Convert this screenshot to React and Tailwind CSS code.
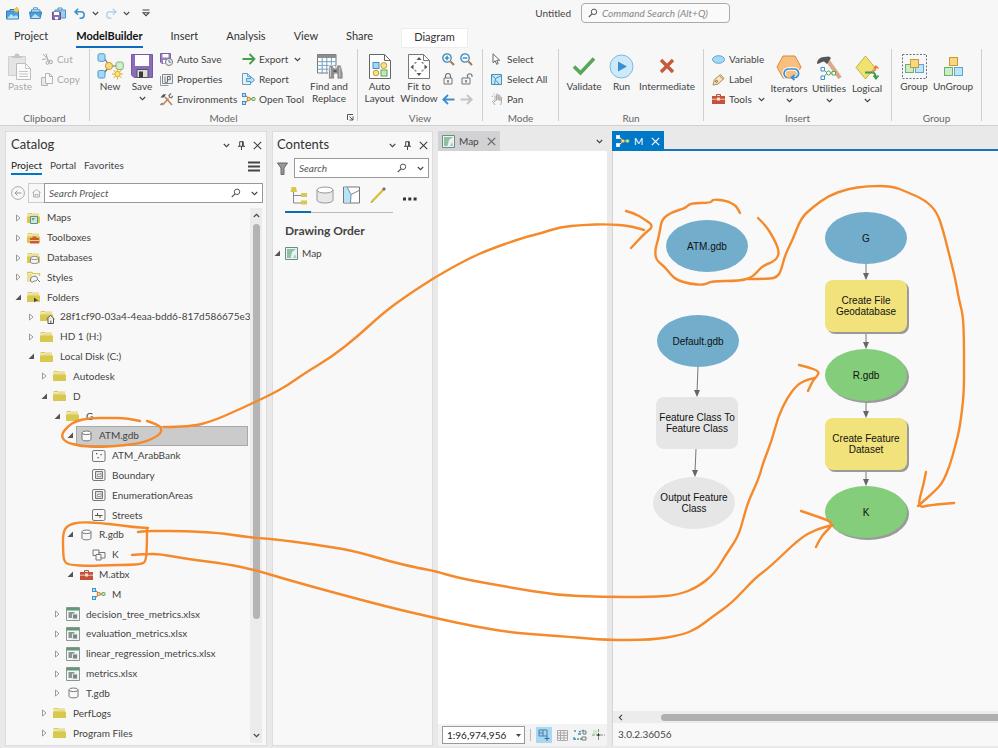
import React, { useState } from 'react'

// ---------- small glyphs ----------

const Svg = ({ w, h, className = '', children }) => (
  <svg width={w} height={h} viewBox={`0 0 ${w} ${h}`} fill="none" className={`shrink-0 ${className}`} aria-hidden="true">
    {children}
  </svg>
)

const Chevron = ({ className = '' }) => (
  <Svg w={7} h={5} className={className}><path d="M.8 1 3.500 3.700 6.200 1" stroke="#444" strokeWidth="1.100" /></Svg>
)

const Close = ({ color = '#444' }) => (
  <Svg w={9} h={9}><path d="M.8 .8 8.200 8.200M8.200 .8 .8 8.200" stroke={color} strokeWidth="1.200" /></Svg>
)

const Pin = () => (
  <Svg w={7} h={9}>
    <path d="M1.700 5V.7h3.600V5M0 5.300h7M3.500 5.300V9" stroke="#444" strokeWidth="1" />
    <path d="M4.500 .7V5" stroke="#444" strokeWidth="1" />
  </Svg>
)

const Magnifier = ({ size = 11 }) => (
  <svg width={size} height={size} viewBox="0 0 11 11" fill="none" className="shrink-0" aria-hidden="true">
    <circle cx="6.600" cy="4.200" r="3" stroke="#555" strokeWidth="1.100" />
    <path d="M4.400 6.400 .9 9.900" stroke="#555" strokeWidth="1.300" />
  </svg>
)

// ---------- ribbon icons ----------

const ProjectNew = () => (
  <Svg w={13} h={13}>
    <path d="M.5 4h12v8H.5z" fill="#4ba0dc" stroke="#2f7fb8" />
    <path d="M4 4V2.500h4" stroke="#2f6f9f" />
    <path d="M1 11.500 5 7l3 2.500 2-1.500 2 2v1.500z" fill="#bfe3f5" />
    <circle cx="10.500" cy="3" r="2.200" fill="#f5c73c" />
    <path d="M10.500 0v1M13 3h-1M8.500 1l.6.6M12.500 1l-.6.6" stroke="#e0aa20" />
  </Svg>
)
const ProjectOpen = () => (
  <Svg w={13} h={12}>
    <path d="M2.500 5V2.800h8.500V5" fill="#dff0fa" stroke="#4a93c4" />
    <path d="M4.500 2.500V.8h4v1.700" stroke="#4a93c4" />
    <path d="M.6 5h12l-1.400 6.400H1.600z" fill="#4ba0dc" stroke="#2f7fb8" />
    <path d="M2 11 6 7l5.500 4z" fill="#bfe3f5" />
  </Svg>
)
const ProjectSave = () => (
  <Svg w={14} h={13}>
    <path d="M3 3h10.500v8H3z" fill="#9ccdea" stroke="#4a93c4" />
    <path d="M6 3V1h4v2" stroke="#4a93c4" />
    <path d="M.5 5h8v7.500h-8z" fill="#8d72b2" stroke="#6a4f92" />
    <path d="M2 5h5v3H2zM3 10h3v2.500H3z" fill="#fff" />
  </Svg>
)
const Undo = ({ color, flip }) => (
  <Svg w={12} h={11} className={flip ? '-scale-x-100' : ''}>
    <path d="M4.200 .8 1 3.800 4.200 6.800M1 3.800h6a3.200 3.200 0 0 1 0 6.400H5.500" stroke={color} strokeWidth="1.500" />
  </Svg>
)
const Customize = () => (
  <Svg w={8} h={8}><path d="M.5 1h7M1.200 3.800 4 6.600 6.800 3.800z" stroke="#444" strokeWidth="1.100" /></Svg>
)
const PasteIcon = () => (
  <Svg w={24} h={27}>
    <path d="M.5 3.500h17v19H.5z" fill="#e4e4e4" stroke="#d0d0d0" />
    <path d="M4 5h10V3h-2.500a2.500 2.500 0 0 0-5 0H4z" fill="#c4c4c4" />
    <path d="M8.500 10.500h9l5 5v11h-14z" fill="#fafafa" stroke="#bcbcbc" />
    <path d="M17.500 10.500v5h5M11 18.500h9M11 21h9M11 23.500h9" stroke="#c6c6c6" />
  </Svg>
)
const Cut = () => (
  <Svg w={12} h={12}>
    <path d="M2 1 9 8.500M5 .5 7 8" stroke="#a9a9a9" />
    <circle cx="9.800" cy="9" r="1.700" stroke="#a9a9a9" /><circle cx="6.500" cy="9.800" r="1.500" stroke="#a9a9a9" />
    <path d="M1 6.500l4-.5" stroke="#a9a9a9" />
  </Svg>
)
const Copy = () => (
  <Svg w={12} h={13}>
    <path d="M.5 4.500h6v8h-6z" fill="#e9e9e9" stroke="#b5b5b5" />
    <path d="M4.500 .5h4l3 3v7h-7z" fill="#f8f8f8" stroke="#b5b5b5" />
    <path d="M8.500 .5v3h3" stroke="#b5b5b5" />
  </Svg>
)
const Burst = ({ x, y }) => (
  <g transform={`translate(${x} ${y})`}>
    <path d="M0-5.500V5.500M-5.500 0H5.500M-4-4 4 4M4-4-4 4" stroke="#dcb02c" strokeWidth="1" />
    <circle r="2.700" fill="#fbe27a" stroke="#dcb02c" />
  </g>
)
const NewModel = () => (
  <Svg w={27} h={27}>
    <path d="M7 5 12 12M7 20l5-6M14 13h7" stroke="#666" strokeWidth="1.200" />
    <rect x="1" y=".8" width="7" height="7.500" rx="1.500" fill="#a5d8f3" stroke="#4a9bcb" />
    <rect x="1" y="17.500" width="7" height="7.500" rx="1.500" fill="#a5d8f3" stroke="#4a9bcb" />
    <circle cx="12" cy="13" r="3.600" fill="#f9d878" stroke="#d59a2b" />
    <rect x="19" y="9" width="7.300" height="7.500" rx="2" fill="#d2edc9" stroke="#79b877" />
    <Burst x={20.500} y={21} />
  </Svg>
)
const Save = () => (
  <Svg w={22} h={24}>
    <path d="M.5 .5h21v23H3L.5 21z" fill="#8a6db8" stroke="#7757a6" />
    <path d="M4 1h14v11H4z" fill="#fdfdfd" />
    <path d="M6 15.500h11v8H6z" fill="#dedede" stroke="#555" />
    <path d="M8 17.500h4v6H8z" fill="#3b3b3b" />
  </Svg>
)
const AutoSave = () => (
  <Svg w={13} h={13}>
    <path d="M.5 .5h10v10H2l-1.500-1.500z" fill="#9a82c0" stroke="#7a5ea8" />
    <path d="M2.500 1h6v3.500h-6zM3 7h3v3.500H3z" fill="#fff" />
    <circle cx="9" cy="9" r="3.500" fill="#f4f4f4" stroke="#777" />
    <path d="M9 6.800V9.200h2" stroke="#3f84b8" />
  </Svg>
)
const Properties = () => (
  <Svg w={13} h={13}>
    <path d="M2.500 1.500h10v9h-10z" fill="#ededed" stroke="#888" />
    <path d="M.5 3v9.500h8" stroke="#999" />
    <path d="M5 3.500v6h2" stroke="#4a93c4" />
    <path d="M7.500 9.500v-6h2.700v3.200H8" stroke="#666" />
  </Svg>
)
const Hammer = () => (
  <Svg w={13} h={13}>
    <path d="M5 4l7 8M8.500 5.500 2.500 12" stroke="#c58a60" strokeWidth="1.800" />
    <path d="M.5 4.500 3 1.500 6 1 4 4.500z" fill="#555" />
    <path d="M11 .5 9 2.500l.5 1.800 2 .4 1.300-1.700M2.500 10l-2 2" stroke="#777" strokeWidth="1.300" />
  </Svg>
)
const Export = () => (
  <Svg w={14} h={12}><path d="M.5 6h12M7.500 1l5 5-5 5" stroke="#43a047" strokeWidth="1.800" /></Svg>
)
const Report = () => (
  <Svg w={13} h={12}>
    <path d="M.5 .5h5l3 3v8h-8z" fill="#e3f1fb" stroke="#6f9fc0" /><path d="M5.500 .5v3h3" stroke="#6f9fc0" />
    <path d="M4.500 5.500h4v-2l4 3.500-4 3.500v-2h-4z" fill="#bfe1f7" stroke="#4a9bcb" />
  </Svg>
)
const ModelGlyph = ({ light }) => (
  <Svg w={14} h={12}>
    <path d="M4 2.500 6.500 6 4 9.500M7 6h4" stroke={light ? '#fff' : '#666'} />
    <rect x=".5" y=".5" width="3" height="3" fill={light ? '#fff' : '#bfe1f7'} stroke={light ? '#d6ecfa' : '#3f93c9'} />
    <rect x=".5" y="8.500" width="3" height="3" fill={light ? '#fff' : '#bfe1f7'} stroke={light ? '#d6ecfa' : '#3f93c9'} />
    <circle cx="6.800" cy="6" r="1.700" fill={light ? '#ffe9a6' : '#f8cf8d'} stroke={light ? '#b9853d' : '#d9822e'} />
    <rect x="10" y="4.500" width="3" height="3" rx=".8" fill="#d5eecf" stroke={light ? '#6aa569' : '#58a657'} />
  </Svg>
)
const FindReplace = () => (
  <Svg w={27} h={27}>
    <path d="M1.500 1.500h18.500v18.500h-18.500z" fill="#fff" stroke="#777" />
    <path d="M1.500 1.500h18.500v3.500h-18.500z" fill="#8d8d8d" />
    <path d="M1.500 8.700h18.500M1.500 12.400h18.500M1.500 16.200h18.500M6.200 5v15M10.800 5v15M15.400 5v15" stroke="#6fa2c4" />
    <path d="M13 12h4l.8 3h2.400l.8-3h4l2 8v6h-6v-5h-2.500v5H12.500v-6z" fill="#8f8f8f" stroke="#f8f8f8" strokeWidth=".8" />
    <path d="M14.500 14v10M23.800 14v10" stroke="#c9c9c9" />
    <path d="M17.500 18h3" stroke="#444" strokeWidth="1.400" />
  </Svg>
)
const AutoLayout = () => (
  <Svg w={22} h={25}>
    <path d="M.5 .5h15l6 6v18H.5z" fill="#fdfdfd" stroke="#666" /><path d="M15.500 .5v6h6" stroke="#666" />
    <rect x="4" y="8.500" width="6" height="6" fill="#a5d8f3" stroke="#3f93c9" />
    <circle cx="14.800" cy="11.500" r="3" fill="#f9e08b" stroke="#c79b2c" />
    <circle cx="7" cy="19" r="2.800" fill="#f9e08b" stroke="#c79b2c" />
    <rect x="12" y="16" width="6" height="6" fill="#c4e8bc" stroke="#58a657" />
  </Svg>
)
const FitWindow = () => (
  <Svg w={22} h={25}>
    <path d="M.5 .5h15l6 6v18H.5z" fill="#fdfdfd" stroke="#777" /><path d="M15.500 .5v6h6" stroke="#777" />
    <path d="m11 3 2.500 3h-5zM11 22l2.500-3h-5zM2.500 13l3-2.500v5zM19.500 13l-3-2.500v5z" fill="#555" />
    <path d="M7 10V8.500h1.500M13.500 8.500H15V10M15 15.500V17h-1.500M8.500 17H7v-1.500" stroke="#777" />
  </Svg>
)
const Zoom = ({ plus }) => (
  <Svg w={13} h={13}>
    <circle cx="5" cy="5" r="4.200" fill="#f4fafd" stroke="#3c87bd" strokeWidth="1.300" />
    <path d={plus ? 'M2.700 5h4.600M5 2.700v4.600' : 'M2.700 5h4.600'} stroke="#2f6f9f" strokeWidth="1.200" />
    <path d="m8.500 8.500 3.500 3.500" stroke="#b5743c" strokeWidth="2" />
  </Svg>
)
const Lock = ({ open }) => (
  <Svg w={13} h={12}>
    <path d={open ? 'M7.500 5V3a2 2 0 0 1 4.500 0v1' : 'M3.500 5V3a2.500 2.500 0 0 1 5 0v2'} stroke="#777" strokeWidth="1.200" />
    <path d="M2 5h8v6H2z" fill="#f5f5f5" stroke="#777" /><path d="M6 7v2.500" stroke="#555" strokeWidth="1.300" />
  </Svg>
)
const Arrow = ({ color, flip }) => (
  <Svg w={13} h={11} className={flip ? '-scale-x-100' : ''}><path d="M12.500 5.500H1.500M6 1 1.300 5.500 6 10" stroke={color} strokeWidth="1.800" /></Svg>
)
const Cursor = () => (
  <Svg w={11} h={12}><path d="M2 .8v9l2.200-2 1.500 3.500 1.500-.7-1.500-3.300h3z" fill="#fff" stroke="#666" /></Svg>
)
const SelectAll = () => (
  <Svg w={11} h={11}><path d="M.5 .5h10v10H.5z" fill="#c2e9fa" stroke="#4a8fb5" /><path d="M.5 1l4 3.500-1 6M4.500 4.500l6-3M5 6.500l3 3.500" stroke="#4a8fb5" /></Svg>
)
const Pan = () => (
  <Svg w={12} h={13}>
    <path d="M4 12 1.500 8.500l1-1L4 9V3.500a.8.8 0 0 1 1.500 0V7.500M5.500 7V2a.8.8 0 0 1 1.700 0v5.500M7.200 7V3a.8.8 0 0 1 1.700 0v5M9 7.500V4.500a.8.8 0 0 1 1.500 0V9L9.500 12" stroke="#a2a2a2" strokeWidth=".9" />
    <path d="M.8 4l1.200-1.500M2.500 1l1-.5" stroke="#aaa" />
  </Svg>
)
const Validate = () => (
  <Svg w={24} h={20}><path d="M2 10.500 8.500 17 22 2.500" stroke="#57a65b" strokeWidth="3.600" /></Svg>
)
const Run = () => (
  <Svg w={25} h={25}><circle cx="12.500" cy="12.500" r="11.500" fill="#cdeafa" stroke="#7cb9df" /><path d="M9 7.500 18 12.500 9 17.500z" fill="#3a8fd0" /></Svg>
)
const Stop = () => (
  <Svg w={16} h={16}><path d="M2 2l12 12M14 2 2 14" stroke="#c85a3c" strokeWidth="3.400" /></Svg>
)
const Variable = () => (
  <Svg w={13} h={9}><ellipse cx="6.500" cy="4.500" rx="6" ry="3.800" fill="#a5d8f7" stroke="#5fa7d3" /></Svg>
)
const LabelIcon = () => (
  <Svg w={13} h={13}><path d="M1 12 2.500 6.500 8.500 1.500l3.500 4-6 5.500z" fill="#fae3bd" stroke="#b08a55" /><circle cx="4.500" cy="8.300" r="1" stroke="#8c6a3b" /><path d="m7.500 2.500 3.500 4" stroke="#b08a55" /></Svg>
)
const Toolbox = () => (
  <Svg w={13} h={10}>
    <path d="M4.500 2V.6h4V2" stroke="#b8452b" /><path d="M0 2h13v8H0z" fill="#c4523a" />
    <path d="M0 5.200h5M8 5.200h5" stroke="#f0c9be" /><path d="M5 3.500h3v3H5z" fill="#f6ded7" />
  </Svg>
)
const Iterators = () => (
  <Svg w={26} h={26}>
    <path d="M7 1h12l6 11-6 11H7L1 12z" fill="#f8bf7e" stroke="#d5893d" />
    <path d="M11 22.500a5 4.500 0 0 1 1-8.500h7a4.500 4.500 0 0 1 1 8.500h-4" stroke="#fff" strokeWidth="3.500" />
    <path d="M11 22.500a5 4.500 0 0 1 1-8.500h7a4.500 4.500 0 0 1 1 8.500h-4M18.500 20l-3 2.500 3 2.500" stroke="#3a8fd0" strokeWidth="1.700" />
  </Svg>
)
const Utilities = () => (
  <Svg w={26} h={26}>
    <path d="m12 6 12 17" stroke="#dba98a" strokeWidth="4" />
    <path d="M1 9c0-4 3-7 7-7l5-.5 2 1.500-4 6-3-2.500C5 6.500 4 9 1 9z" fill="#555" />
    <path d="M7 14 11 18 7 23M12 18h6" stroke="#58a657" />
    <path d="M5 12.500h3.500V16H5zM5 21h3.500v3.500H5z" fill="#fff" stroke="#3a8fd0" />
    <circle cx="12.500" cy="18" r="2" fill="#fff" stroke="#58a657" /><path d="M16 16.500h3.500V20H16z" fill="#fff" stroke="#58a657" />
  </Svg>
)
const Logical = () => (
  <Svg w={25} h={26}>
    <path d="M10.500 1 20 12.500 10.500 24 1 12.500z" fill="#f0e173" stroke="#c4b23e" />
    <path d="M10 17.500h7c3 0 3.500 2 4 6M18.500 20.500l2.500 3 2.500-3" stroke="#3f9a4a" strokeWidth="1.800" />
    <path d="M17 17c3-1 4-2 4-5M18.800 13.500 21 11l2.500 2.500" stroke="#e08050" strokeWidth="1.500" />
  </Svg>
)
const Blocks = ({ x = 0, y = 0, tight }) => (
  <g transform={`translate(${x} ${y})`}>
    <rect x=".5" y={tight ? 8.500 : 10.500} width="8" height="8" fill="#cdecc5" stroke="#6bb068" />
    <rect x="10.500" y={tight ? 8.500 : 10.500} width="8" height="8" fill="#bfe3fa" stroke="#5fa7d3" />
    <rect x="5.500" y={tight ? 3.500 : .5} width="8" height="8" fill="#f8d77f" stroke="#c99b35" />
  </g>
)
const GroupIcon = () => (
  <Svg w={25} h={25}>
    <path d="M.5 .5h24v24H.5z" stroke="#6a7280" strokeDasharray="2 1.500" /><Blocks x={3} y={2} tight />
  </Svg>
)
const UnGroupIcon = () => <Svg w={19} h={19}><Blocks /></Svg>

// ---------- tree icons ----------

const FolderShape = () => (
  <>
    <path d="M.5 2.500h4l1-1.200h6.500v9H.5z" fill="#e9df9a" />
    <path d="M0 4.500h13V11H0z" fill="#d9c84e" />
    <path d="M.5 2.500 1 1.500h4" stroke="#d9c84e" />
  </>
)
const TREE_ICONS = {
  folder: <Svg w={14} h={12}><FolderShape /></Svg>,
  maps: <Svg w={14} h={12}><FolderShape /><path d="M3.500 4.500h7v7h-7z" fill="#cfe8d7" stroke="#5c8f86" /><path d="M5 6h3L5.500 9z" fill="#5c9f86" /></Svg>,
  toolboxes: <Svg w={14} h={12}><FolderShape /><path d="M3 6h9v5.500H3zM5.500 4.500h4V6h-4z" fill="#cb5a33" /><path d="M3 8.500h9" stroke="#f3c9a8" /></Svg>,
  databases: <Svg w={14} h={12}><FolderShape /><path d="M3.500 6v4c0 2 8 2 8 0V6" fill="#f4f4f4" stroke="#888" /><ellipse cx="7.500" cy="6" rx="4" ry="1.500" fill="#fff" stroke="#888" /></Svg>,
  styles: <Svg w={14} h={12}><path d="M.5 11V1.500h4.500l1 1.200h6.500V5" stroke="#d9c84e" strokeWidth="1.300" /><path d="M0 3h5v8H0z" fill="#e9df9a" /><path d="M3.500 9c0-3 3-4.500 5.500-3.500 2 1 2 3 .5 4-1.500 1-2 0-3 1s-3 .5-3-1.500z" fill="#f4f4f4" stroke="#777" /><path d="m10 8 3 3" stroke="#777" /></Svg>,
  folders: <Svg w={14} h={12}><FolderShape /><path d="M7 6.500v5l2-1.700h2.500z" fill="#444" /></Svg>,
  home: <Svg w={15} h={14}><FolderShape /><path d="M6.500 9 10.500 5.500 14.500 9M8 8.500v5h5.500v-5" fill="#f8f8f8" stroke="#555" /><path d="M10.800 10.500v3" stroke="#555" /></Svg>,
  gdb: <Svg w={11} h={12}><path d="M1 2.800v6.400c0 2.200 9 2.200 9 0V2.800" fill="#f8f8f8" stroke="#777" /><ellipse cx="5.500" cy="2.800" rx="4.500" ry="1.800" fill="#fff" stroke="#777" /></Svg>,
  points: <Svg w={14} h={12}><rect x=".5" y=".5" width="12.500" height="11" rx="1.500" stroke="#777" /><path d="M4 3h1.300v1.300H4zM8.500 4h1.300v1.300H8.500zM5.500 7h1.300v1.300H5.500z" fill="#555" /></Svg>,
  polygon: <Svg w={14} h={12}><rect x=".5" y=".5" width="12.500" height="11" rx="1.500" stroke="#777" /><path d="M3.500 2.500h7v7h-7z" fill="#ddd" stroke="#777" /><path d="M5.500 7.500v-2h1.500l2-1v3z" fill="#fff" stroke="#888" strokeWidth=".8" /></Svg>,
  line: <Svg w={14} h={12}><rect x=".5" y=".5" width="12.500" height="11" rx="1.500" stroke="#777" /><path d="M3 6.500h7.500M5.500 4v2.500M8 6.500v2.500" stroke="#555" /></Svg>,
  dataset: <Svg w={14} h={12}><path d="M1 1h6v5.500H1z" stroke="#777" /><path d="M7 3.500h6V9H7z" fill="#f8f8f8" stroke="#777" /><path d="M4 5.500h5V11H4z" fill="#f8f8f8" stroke="#777" /></Svg>,
  toolbox: <Toolbox />,
  model: <ModelGlyph />,
  excel: <Svg w={14} h={14}><path d="M.5 .5h13v13H.5z" fill="#f3f6f4" stroke="#87988f" /><path d="M1 1h12v2.500H1z" fill="#5f9a75" /><path d="M2.500 5h6v6h-6z" fill="#8a9690" /><path d="M6.500 7h5v5h-5z" fill="#7c828a" stroke="#e8e8e8" /></Svg>,
}

const MapIcon = () => (
  <Svg w={13} h={13}>
    <path d="M.5 .5h12v12H.5z" fill="#eaf3ec" stroke="#6b8f82" />
    <path d="M2 2h9L7 5 5.500 11H2z" fill="#8fc0a3" /><path d="M8 11l2-4 1.500 4z" fill="#9fd0dd" />
  </Svg>
)

const Twisty = ({ open }) => open
  ? <Svg w={7} h={7}><path d="M6 .5V6H.5z" fill="#555" /></Svg>
  : <Svg w={7} h={8}><path d="M1.500 1v6l3.500-3z" fill="#fff" stroke="#999" /></Svg>

// ---------- data ----------

const TABS = ['Project', 'ModelBuilder', 'Insert', 'Analysis', 'View', 'Share']

const LEVELS = ['pl-[9px]', 'pl-[22px]', 'pl-[35px]', 'pl-[48px]', 'pl-[61px]', 'pl-[74px]']

const TREE = [
  [0, 'closed', 'maps', 'Maps'],
  [0, 'closed', 'toolboxes', 'Toolboxes'],
  [0, 'closed', 'databases', 'Databases'],
  [0, 'closed', 'styles', 'Styles'],
  [0, 'open', 'folders', 'Folders'],
  [1, 'closed', 'home', '28f1cf90-03a4-4eaa-bdd6-817d586675e3'],
  [1, 'closed', 'folder', 'HD 1 (H:)'],
  [1, 'open', 'folder', 'Local Disk (C:)'],
  [2, 'closed', 'folder', 'Autodesk'],
  [2, 'open', 'folder', 'D'],
  [3, 'open', 'folder', 'G'],
  [4, 'open', 'gdb', 'ATM.gdb'],
  [5, '', 'points', 'ATM_ArabBank'],
  [5, '', 'polygon', 'Boundary'],
  [5, '', 'polygon', 'EnumerationAreas'],
  [5, '', 'line', 'Streets'],
  [4, 'open', 'gdb', 'R.gdb'],
  [5, '', 'dataset', 'K'],
  [4, 'open', 'toolbox', 'M.atbx'],
  [5, '', 'model', 'M'],
  [3, 'closed', 'excel', 'decision_tree_metrics.xlsx'],
  [3, 'closed', 'excel', 'evaluation_metrics.xlsx'],
  [3, 'closed', 'excel', 'linear_regression_metrics.xlsx'],
  [3, 'closed', 'excel', 'metrics.xlsx'],
  [3, 'closed', 'gdb', 'T.gdb'],
  [2, 'closed', 'folder', 'PerfLogs'],
  [2, 'closed', 'folder', 'Program Files'],
]

// Model elements on the diagram canvas
const NODES = [
  { text: 'ATM.gdb', className: 'left-[53px] top-[69px] rounded-[50%] bg-[#72adcc]' },
  { text: 'G', className: 'left-[212px] top-[61px] rounded-[50%] bg-[#72adcc]' },
  { text: 'Default.gdb', className: 'left-[44px] top-[164px] rounded-[50%] bg-[#72adcc]' },
  { text: 'Feature Class To Feature Class', className: 'left-[43px] top-[246px] rounded-lg bg-[#e6e6e6]' },
  { text: 'Output Feature Class', className: 'left-[40px] top-[326px] rounded-[50%] px-1 bg-[#e6e6e6]' },
  { text: 'Create File Geodatabase', className: 'left-[212px] top-[129px] rounded-lg px-2 bg-[#f2e27b] shadow-[2px_2px_0_#9a9a9a]' },
  { text: 'R.gdb', className: 'left-[212px] top-[198px] rounded-[50%] bg-[#84cd7b] shadow-[2px_2px_0_#9a9a9a]' },
  { text: 'Create Feature Dataset', className: 'left-[212px] top-[267px] rounded-lg px-1 bg-[#f2e27b] shadow-[2px_2px_0_#9a9a9a]' },
  { text: 'K', className: 'left-[212px] top-[335px] rounded-[50%] bg-[#84cd7b] shadow-[2px_2px_0_#9a9a9a]' },
]

const LINKS = [
  [253, 112, 253, 129], [253, 182, 253, 198], [253, 250, 253, 267], [253, 319, 253, 335],
  [85, 216, 84, 246], [83, 298, 82, 326],
]

// Freehand ink strokes
const INK = [
  [[140, 421], [127, 418], [108, 418], [90, 418], [76, 421], [68, 426], [61, 435], [65, 442], [80, 446], [98, 447], [117, 446], [143, 443], [160, 435], [162, 428], [156, 424], [147, 421]],
  [[164, 427], [190, 427], [213, 421], [240, 409], [255, 402], [272, 394], [288, 385], [305, 373], [333, 356], [358, 336], [382, 314], [402, 299], [435, 277], [468, 259], [488, 250], [522, 238], [542, 233], [560, 227], [582, 225], [608, 224], [630, 226], [644, 230]],
  [[626, 211], [634, 213], [644, 219], [654, 226], [644, 234], [631, 248]],
  [[740, 213], [737, 207], [733, 204], [727, 201], [713, 199], [711, 203], [690, 203], [686, 208], [672, 212], [662, 219], [660, 230], [658, 240], [655, 250], [656, 260], [665, 267], [671, 275], [677, 280], [690, 284], [705, 285], [711, 281], [740, 281], [753, 277], [762, 266], [773, 262], [778, 257], [779, 250], [773, 237], [766, 226], [758, 218]],
  [[748, 279], [770, 279], [777, 277], [781, 271], [785, 255], [793, 239], [801, 218], [813, 207], [828, 196], [847, 189], [867, 186], [892, 186], [907, 192], [925, 200], [937, 212], [943, 230], [948, 250], [955, 277], [959, 300], [963, 315], [964, 340], [964, 365], [964, 393], [960, 427], [955, 447], [950, 465], [943, 482], [935, 491], [918, 506]],
  [[926, 472], [924, 483], [917, 508], [930, 505], [954, 503]],
  [[147, 528], [147, 545], [146, 560], [143, 564], [128, 565], [110, 565], [90, 566], [70, 565], [64, 562], [63, 550], [63, 532], [68, 525], [80, 522], [100, 523], [118, 525], [133, 527], [148, 528]],
  [[138, 532], [147, 531], [157, 531], [183, 531], [220, 533], [240, 536], [257, 538], [272, 539], [312, 544], [355, 551], [388, 561], [418, 568], [435, 571], [458, 578], [508, 587], [555, 595], [602, 597], [652, 597], [678, 595], [698, 587], [715, 573], [725, 556], [738, 537], [743, 520], [748, 502], [759, 478], [763, 463], [772, 440], [778, 417], [787, 398], [797, 385], [806, 380], [815, 378]],
  [[799, 365], [808, 367], [821, 372], [813, 380], [808, 391]],
  [[132, 555], [145, 554], [160, 554], [187, 559], [227, 564], [255, 570], [285, 579], [328, 591], [388, 607], [435, 618], [477, 627], [515, 633], [572, 637], [605, 640], [652, 640], [682, 635], [698, 628], [712, 617], [732, 603], [755, 578], [770, 567], [800, 538], [817, 529], [833, 525]],
  [[801, 511], [816, 516], [835, 523], [822, 535], [816, 547]],
]

// midpoint smoothing keeps the hand-drawn wobble
const toPath = (pts) => {
  let d = `M${pts[0][0]} ${pts[0][1]}`
  for (let i = 1; i < pts.length - 1; i++) {
    const mx = (pts[i][0] + pts[i + 1][0]) / 2
    const my = (pts[i][1] + pts[i + 1][1]) / 2
    d += `Q${pts[i][0]} ${pts[i][1]} ${mx} ${my}`
  }
  const last = pts[pts.length - 1]
  return d + `L${last[0]} ${last[1]}`
}

// ---------- ribbon pieces ----------

const RibbonGroup = ({ label, width, launcher, children }) => (
  <section className={`relative flex h-[72px] shrink-0 flex-col border-r border-[#cfcfcf] ${width}`}>
    <div className="flex h-[60px] shrink-0 items-start">{children}</div>
    <div className="flex h-[18px] shrink-0 items-center justify-center text-[#666]">{label}</div>
    {launcher && (
      <button aria-label="Model options" className="absolute right-[3px] bottom-0">
        <Svg w={7} h={7}><path d="M.5 6V.5H6M2.500 2.500 6 6M6 2.500V6H2.500" stroke="#555" /></Svg>
      </button>
    )}
  </section>
)

const Big = ({ icon, label, width, arrow, low, dim }) => (
  <button className={`flex shrink-0 flex-col items-center leading-3 ${low ? 'pt-[5px]' : 'pt-[3px]'} ${width} ${dim ? 'text-[#aaa]' : ''}`}>
    <span className="flex h-[28px] items-center justify-center">{icon}</span>
    <span className="whitespace-pre-line text-center">{label}</span>
    {arrow && <Chevron className="mt-[4px]" />}
  </button>
)

const Small = ({ icon, label, arrow, dim }) => (
  <button className={`flex h-5 items-center gap-1 whitespace-nowrap ${dim ? 'text-[#aaa]' : ''}`}>
    <span className="flex w-[13px] justify-center">{icon}</span>
    {label}
    {arrow && <Chevron className="ml-[2px]" />}
  </button>
)

const PanelHeader = ({ title }) => (
  <header className="flex h-[26px] items-center gap-2 pr-1">
    <h2 className="flex-1 text-[13px] text-[#333]">{title}</h2>
    <button aria-label={`${title} menu`}><Chevron /></button>
    <button aria-label={`Pin ${title}`}><Pin /></button>
    <button aria-label={`Close ${title}`}><Close /></button>
  </header>
)

function Ribbon() {
  return (
    <div className="flex h-[77px] shrink-0 overflow-hidden border-b border-[#cfcfcf]">
      <RibbonGroup label="Clipboard" width="w-[90px]">
        <Big dim icon={<PasteIcon />} label="Paste" width="w-[40px]" />
        <div>
          <Small dim icon={<Cut />} label="Cut" />
          <Small dim icon={<Copy />} label="Copy" />
        </div>
      </RibbonGroup>
      <RibbonGroup label="Model" width="w-[268px]" launcher>
        <Big icon={<NewModel />} label="New" width="w-[40px]" />
        <Big icon={<Save />} label="Save" width="w-[24px]" arrow />
        <div className="w-[88px] shrink-0 pl-[6px]">
          <Small icon={<AutoSave />} label="Auto Save" />
          <Small icon={<Properties />} label="Properties" />
          <Small icon={<Hammer />} label="Environments" />
        </div>
        <div className="w-[64px] shrink-0">
          <Small icon={<Export />} label="Export" arrow />
          <Small icon={<Report />} label="Report" />
          <Small icon={<ModelGlyph />} label="Open Tool" />
        </div>
        <Big icon={<FindReplace />} label={'Find and\nReplace'} width="w-[46px]" />
      </RibbonGroup>
      <RibbonGroup label="View" width="w-[125px]">
        <Big icon={<AutoLayout />} label={'Auto\nLayout'} width="w-[43px]" />
        <Big icon={<FitWindow />} label={'Fit to\nWindow'} width="w-[36px]" />
        <div className="grid shrink-0 grid-cols-[18px_18px] grid-rows-[20px_20px_20px] place-items-center pl-[2px]">
          <button aria-label="Zoom in"><Zoom plus /></button>
          <button aria-label="Zoom out"><Zoom /></button>
          <button aria-label="Lock"><Lock /></button>
          <button aria-label="Unlock"><Lock open /></button>
          <button aria-label="Previous extent"><Arrow color="#3a8fd0" /></button>
          <button aria-label="Next extent"><Arrow color="#c4c4c4" flip /></button>
        </div>
      </RibbonGroup>
      <RibbonGroup label="Mode" width="w-[76px]">
        <div className="pl-[7px]">
          <Small icon={<Cursor />} label="Select" />
          <Small icon={<SelectAll />} label="Select All" />
          <Small icon={<Pan />} label="Pan" />
        </div>
      </RibbonGroup>
      <RibbonGroup label="Run" width="w-[145px]">
        <Big icon={<Validate />} label="Validate" width="w-[50px]" />
        <Big icon={<Run />} label="Run" width="w-[25px]" />
        <Big icon={<Stop />} label="Intermediate" width="w-[66px]" />
      </RibbonGroup>
      <RibbonGroup label="Insert" width="w-[188px]">
        <div className="w-[64px] shrink-0 pl-2">
          <Small icon={<Variable />} label="Variable" />
          <Small icon={<LabelIcon />} label="Label" />
          <Small icon={<Toolbox />} label="Tools" arrow />
        </div>
        <Big low icon={<Iterators />} label="Iterators" width="w-[42px]" arrow />
        <Big low icon={<Utilities />} label="Utilities" width="w-[38px]" arrow />
        <Big low icon={<Logical />} label="Logical" width="w-[38px]" arrow />
      </RibbonGroup>
      <RibbonGroup label="Group" width="w-[90px]">
        <Big icon={<GroupIcon />} label="Group" width="w-[44px]" />
        <Big icon={<UnGroupIcon />} label="UnGroup" width="w-[34px]" />
      </RibbonGroup>
    </div>
  )
}

function Catalog() {
  const [selected, setSelected] = useState('ATM.gdb')

  return (
    <aside className="flex w-[262px] shrink-0 flex-col border border-[#dcdcdc] bg-[#f8f8f8] pl-[5px]">
      <PanelHeader title="Catalog" />
      <div className="flex h-[17px] items-start gap-2">
        <button className="h-[17px] border-b-2 border-[#0078c8] text-[#222]">Project</button>
        <button>Portal</button>
        <button>Favorites</button>
        <button aria-label="Catalog options" className="mr-[6px] ml-auto">
          <Svg w={12} h={14}><path d="M0 4.500h12M0 8.500h12M0 12.500h12" stroke="#444" strokeWidth="2.200" /></Svg>
        </button>
      </div>
      <div className="mt-2 flex h-5 shrink-0 items-center pr-[3px]">
        <button aria-label="Back" className="mr-[3px]">
          <Svg w={14} h={14}><circle cx="7" cy="7" r="6.400" stroke="#aaa" /><path d="M10.500 7H4M6.500 4.500 4 7l2.500 2.500" stroke="#999" /></Svg>
        </button>
        <button aria-label="Home" className="flex h-5 w-4 items-center justify-center border border-r-0 border-[#ccc]">
          <Svg w={9} h={10}><path d="M.5 4.500 4.500 1.500 8.500 4.500M1.500 4v5h6V4M3 9V6.500h3V9" stroke="#b5b5b5" /></Svg>
        </button>
        <div className="flex h-5 flex-1 items-center gap-[10px] border border-[#999] bg-white px-1">
          <input aria-label="Search Project" placeholder="Search Project" className="w-0 flex-1 italic outline-none placeholder:text-[#555]" />
          <Magnifier size={10} />
          <Chevron />
        </div>
      </div>
      <div className="mt-[5px] mb-[2px] flex min-h-0 flex-1 pr-[4px]">
        <ul className="-ml-[5px] mr-[2px] flex min-w-0 flex-1 flex-col">
          {TREE.map(([level, state, icon, text]) => (
            <li key={text} className={`flex min-h-[19px] flex-1 ${LEVELS[level]}`}>
              <span className="flex w-[9px] shrink-0 items-center">{state && <Twisty open={state == 'open'} />}</span>
              <button
                onClick={() => setSelected(text)}
                className={`flex min-w-0 flex-1 items-center gap-[6px] border pl-[2px] whitespace-nowrap ${selected == text ? 'border-[#a8a8a8] bg-[#cbcbcb]' : 'border-transparent'}`}
              >
                <span className="flex w-[14px] shrink-0 items-center justify-center">{TREE_ICONS[icon]}</span>
                {text}
              </button>
            </li>
          ))}
        </ul>
        <div className="flex w-3 shrink-0 flex-col items-center bg-[#ececec] py-[3px]">
          <Chevron className="my-[2px] rotate-180" />
          <div className="flex min-h-0 w-[7px] flex-1 flex-col pt-1"><div className="h-[78%] rounded-full bg-[#b4b4b4]" /></div>
          <Chevron className="my-[2px]" />
        </div>
      </div>
    </aside>
  )
}

function Contents() {
  return (
    <aside className="flex w-[161px] shrink-0 flex-col border border-[#dcdcdc] bg-[#f8f8f8] pl-[4px]">
      <PanelHeader title="Contents" />
      <div className="flex h-5 items-center gap-[6px] pr-[3px]">
        <button aria-label="Filter">
          <Svg w={11} h={13}><path d="M.5 1h10L7 6v6.500H4V6z" fill="#999" stroke="#666" /></Svg>
        </button>
        <div className="flex h-5 flex-1 items-center gap-[10px] border border-[#999] bg-white px-1">
          <input aria-label="Search" placeholder="Search" className="w-0 flex-1 italic outline-none placeholder:text-[#555]" />
          <Magnifier size={10} />
          <Chevron />
        </div>
      </div>
      <div className="mt-[7px] flex h-[28px] items-center pl-2">
        <div className="flex h-full w-[108px] items-start border-b border-[#bbb]">
          <button aria-label="List by drawing order" className="flex h-[28px] w-[26px] items-start justify-center border-b-2 border-[#0f6cb0] pt-px">
            <Svg w={19} h={20}><path d="M4.500 6v11h8M4.500 9.500h8" stroke="#888" /><path d="M2.500 1h4.500l1 5H1.500zM12 7h6v4h-6zM12 14.500h6v4h-6z" fill="#d9c84e" /></Svg>
          </button>
          <button aria-label="List by data source" className="flex w-[27px] justify-center pt-px">
            <Svg w={18} h={18}><path d="M1 4v10c0 4 16 4 16 0V4" fill="#e8e8e8" stroke="#999" /><ellipse cx="9" cy="4" rx="8" ry="3" fill="#fff" stroke="#999" /></Svg>
          </button>
          <button aria-label="List by selection" className="flex w-[27px] justify-center pt-px">
            <Svg w={17} h={18}><path d="M.5 1h16v16H.5z" fill="#fff" stroke="#777" /><path d="M1 1.500h3L8 8.500l-.5 8H1z" fill="#b6e4f7" /><path d="M4 1l4 7.500-.5 8.500M8 8.500l8-4" stroke="#6a8fa0" /></Svg>
          </button>
          <button aria-label="List by editing" className="flex w-[27px] justify-center pt-px">
            <Svg w={17} h={18}><path d="M2 15.500 14 3" stroke="#d9c23c" strokeWidth="2.400" /><path d="m13 4 2-2" stroke="#8a6a6a" strokeWidth="2.800" /><path d="m.8 17 1.700-2" stroke="#777" /></Svg>
          </button>
        </div>
        <button aria-label="More" className="ml-[10px]">
          <Svg w={14} h={4}><path d="M0 .5h3v3H0zM5.300 .5h3v3h-3zM10.600 .5h3v3h-3z" fill="#333" /></Svg>
        </button>
      </div>
      <h3 className="mt-2 pl-2 text-[12px] leading-5 font-bold text-[#444]">Drawing Order</h3>
      <div className="mt-[2px] flex h-5 items-center gap-1"><span className="-ml-[3px]"><Twisty open /></span><MapIcon /><span>Map</span></div>
    </aside>
  )
}

function MapPane() {
  return (
    <section className="flex w-[169px] shrink-0 flex-col">
      <div className="flex h-5 items-center justify-between pr-1">
        <div className="flex h-5 w-[62px] items-center gap-1 bg-[#d2d2d4] px-1"><MapIcon /><span className="flex-1">Map</span><button aria-label="Close Map"><Close color="#666" /></button></div>
        <button aria-label="View list"><Chevron /></button>
      </div>
      <div className="flex-1 bg-white" />
      <div className="flex h-[22px] items-center gap-[5px] bg-[#f3f3f3] pl-1">
        <div className="flex h-[18px] w-[83px] items-center border border-[#999] bg-white pr-[3px]">
          <select aria-label="Map scale" className="w-0 flex-1 appearance-none pl-1 text-[#222] outline-none">
            <option>1:96,974,956</option>
          </select>
          <Svg w={5} h={3}><path d="M0 0h5L2.500 3z" fill="#444" /></Svg>
        </div>
        <span className="h-3 border-l border-[#bbb]" />
        <button aria-label="Snapping" className="flex size-4 items-center justify-center bg-[#a9d8f5]">
          <Svg w={12} h={12}><path d="M1 1h8v6H1zM5 1v6M1 4h4" stroke="#4a7fa5" /><path d="M9 7v5M6.500 9.500h5" stroke="#3a6f95" /></Svg>
        </button>
        <button aria-label="Grid">
          <Svg w={11} h={11}><path d="M.5 .5h10v10H.5zM.5 3h10M.5 5.500h10M.5 8h10M3.500 .5v10M7 .5v10" stroke="#aaa" /></Svg>
        </button>
        <button aria-label="Inference">
          <Svg w={14} h={12}><path d="M1 2h3M6 3l5-2M1 10h8" stroke="#4a9b8b" strokeDasharray="2 1" strokeWidth="1.500" /><path d="M10 2h3v3h-3zM9 8h4v3H9z" stroke="#777" /><path d="M1 8v3M5 5h3" stroke="#3a8fd0" strokeWidth="1.300" /></Svg>
        </button>
        <button aria-label="Correction">
          <Svg w={13} h={12}><path d="M6.500 0v12M0 6h13" stroke="#888" strokeDasharray="3 1" /><path d="M1 1h4v4H1z" fill="#cfe8cb" /><path d="M5 6h3M6.500 4.500v3" stroke="#333" /></Svg>
        </button>
      </div>
    </section>
  )
}

function ModelView() {
  return (
    <section className="flex min-w-0 flex-1 flex-col">
      <div className="flex h-5 border-b-2 border-[#1a73c0]">
        <div className="flex h-5 w-[52px] items-center gap-1 bg-[#0078c8] px-1 text-white">
          <ModelGlyph light /><span className="flex-1">M</span>
          <button aria-label="Close M"><Close color="#fff" /></button>
        </div>
      </div>
      <div className="relative flex-1 overflow-hidden border-l border-[#d4d4d4] bg-[#f9f9f9]">
        <svg width="386" height="560" className="absolute top-0 left-0" aria-hidden="true">
          {LINKS.map(([x1, y1, x2, y2]) => (
            <g key={`${x1}-${y1}`} stroke="#777" fill="#666">
              <line x1={x1} y1={y1} x2={x2} y2={y2 - 5} />
              <path d={`M${x2 - 3} ${y2 - 7}h6l-3 7z`} stroke="none" />
            </g>
          ))}
        </svg>
        {NODES.map((node) => (
          <div
            key={node.text}
            className={`absolute flex h-[52px] w-[82px] items-center justify-center text-center font-['Liberation_Sans',Arial,sans-serif] text-[10px] leading-[11px] text-[#111] ${node.className}`}
          >
            {node.text}
          </div>
        ))}
      </div>
      <div className="flex h-3 items-center gap-[37px] border-l border-[#d4d4d4] bg-[#ececec] pl-[4px]">
        <Chevron className="rotate-90" />
        <div className="h-[7px] flex-1 rounded-l-full bg-[#b0b0b0]" />
      </div>
      <div className="flex h-[23px] items-center border-l border-[#d4d4d4] bg-[#f8f8f8] pl-[5px]">3.0.2.36056</div>
    </section>
  )
}

export default function App() {
  const [tab, setTab] = useState('ModelBuilder')

  return (
    <div className="relative flex h-screen flex-col overflow-hidden bg-[#f7f7f7] font-['Lato','Open_Sans',sans-serif] text-[10px] text-[#444]">
      <div className="flex h-[26px] shrink-0 items-center pl-[6px]">
        <div className="flex flex-1 items-center">
          <button aria-label="New project" className="mr-[10px]"><ProjectNew /></button>
          <button aria-label="Open project" className="mr-[10px]"><ProjectOpen /></button>
          <button aria-label="Save project" className="mr-2"><ProjectSave /></button>
          <button aria-label="Undo" className="mr-[6px]"><Undo color="#3a8fd0" /></button>
          <Chevron className="mr-[6px]" />
          <button aria-label="Redo" className="mr-[6px]"><Undo color="#b9d3e6" flip /></button>
          <Chevron className="mr-3" />
          <button aria-label="Customize toolbar"><Customize /></button>
        </div>
        <span className="mr-[10px]">Untitled</span>
        <div className="mr-[268px] flex h-5 w-[149px] items-center gap-1 rounded-sm border border-[#aaa] bg-[#fafafa] pl-[6px]">
          <Magnifier size={10} />
          <input aria-label="Command Search" placeholder="Command Search (Alt+Q)" className="w-0 flex-1 italic outline-none placeholder:text-[#888]" />
        </div>
      </div>

      <nav className="flex h-[23px] shrink-0 items-center gap-[28px] pl-[14px] text-[11px] text-[#333]">
        {TABS.map((name) => (
          <button
            key={name}
            onClick={() => setTab(name)}
            className={`h-5 border-b-2 ${tab == name ? 'border-[#0f6cbd] font-bold text-[#111]' : 'border-transparent'}`}
          >
            {name}
          </button>
        ))}
        <button className="h-5 border border-[#ededed] bg-white px-3">Diagram</button>
      </nav>

      <Ribbon />

      <main className="flex min-h-0 flex-1 bg-[#e9e9e9] pt-[5px] pl-[5px]">
        <div className="mb-[2px] flex min-w-0 flex-1 gap-[5px]">
          <Catalog />
          <Contents />
          <MapPane />
          <ModelView />
        </div>
      </main>

      <svg width="998" height="748" className="pointer-events-none absolute top-0 left-0" fill="none" aria-hidden="true">
        {INK.map((stroke, i) => (
          <path key={i} d={toPath(stroke)} stroke="#f58a2c" strokeWidth="2.400" strokeLinecap="round" strokeLinejoin="round" />
        ))}
      </svg>
    </div>
  )
}
